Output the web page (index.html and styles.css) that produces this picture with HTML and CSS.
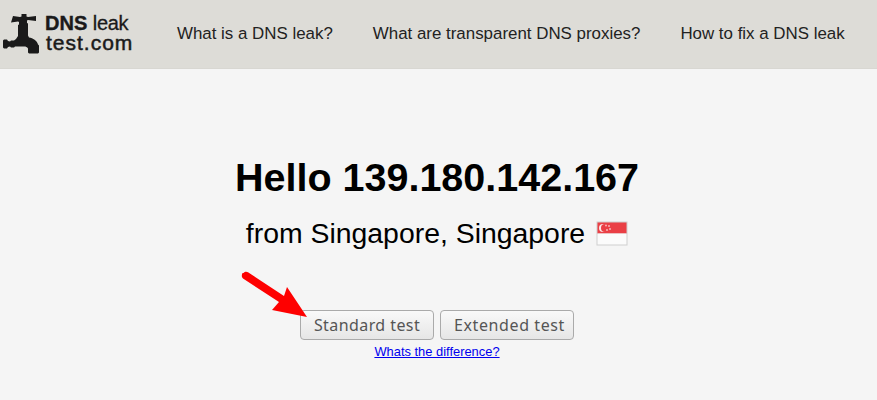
FILE: index.html
```html
<!DOCTYPE html>
<html lang="en">
<head>
<meta charset="utf-8">
<title>DNS leak test</title>
<link rel="stylesheet" href="styles.css">
</head>
<body>
<header class="top">
  <a class="logo" href="#">
    <svg class="tap" width="40" height="40" viewBox="2 13 40 40" aria-hidden="true">
      <path fill="#1a1a1a" d="M13 15l7 1 1.500-.5v-2.500h5v2.500l1.500.5 8-1v5l-8-1-1 .5v2.500l1 .5v12l1 2c4 .5 8 3 9 7l1 1v7l-1 1h-9l-1-1v-4c-1-1.500-2-2-4-2h-9l-1 1h-3l-1-1-2 .5-1 1.500h-3l-1-1v-7l1-1h3l1 1.500 2 .5 1-1h3l2-1.500 2-3v-11l1-.5v-2.500l-1-.5-7 1z"/>
    </svg>
    <span class="logo-text"><b>DNS</b> <span class="leak">leak</span><br><span class="domain">test.com</span></span>
  </a>
  <nav class="nav">
    <a href="#">What is a DNS leak?</a>
    <a href="#">What are transparent DNS proxies?</a>
    <a href="#">How to fix a DNS leak</a>
  </nav>
</header>
<main class="main">
  <h1 class="hello">Hello 139.180.142.167</h1>
  <p class="from">from Singapore, Singapore
    <svg class="flag" width="32" height="25" viewBox="0 0 32 25" aria-hidden="true">
      <rect x=".5" y=".5" width="31" height="24" fill="#cfcfcf"/>
      <rect x="1.500" y="1.500" width="29" height="11" fill="#ea3f45"/>
      <rect x="1.500" y="12.500" width="29" height="11" fill="#fbfbfb"/>
      <circle cx="7" cy="7" r="4" fill="#fbe7e7"/>
      <circle cx="9" cy="7" r="4" fill="#ea3f45"/>
      <g fill="#f6b4b4"><circle cx="10" cy="4.500" r="1"/><circle cx="13" cy="5" r="1"/><circle cx="11" cy="9" r="1"/><circle cx="14" cy="8" r="1"/></g>
    </svg>
  </p>
  <div class="actions">
    <div class="buttons">
      <button class="btn" type="button">Standard test</button>
      <button class="btn btn-ext" type="button">Extended test</button>
    </div>
    <a class="diff" href="#">Whats the difference?</a>
    <svg class="arrow" width="70" height="60" viewBox="0 0 70 60" aria-hidden="true">
      <path fill="#fe0000" d="M2.500 2c1.200-1.500 3-1.700 4.500-.8l36 23.800 3-9 20 30-35-7 7-8-36-23.500c-1.500-1.200-1.500-3.200-.5-5.500z"/>
    </svg>
  </div>
</main>
</body>
</html>
```
FILE: styles.css
```css
html, body {
  margin: 0;
  padding: 0;
}
body {
  background: #f5f5f5;
  color: #000;
  font-family: "Liberation Sans", Arial, sans-serif;
}
.top {
  display: flex;
  align-items: center;
  height: 68px;
  background: #dddcd7;
  border-bottom: 1px solid #d8d7d2;
}
.logo {
  display: flex;
  align-items: center;
  width: 177px;
  flex: none;
  padding-left: 2px;
  box-sizing: border-box;
  color: #1a1a1a;
  text-decoration: none;
}
.tap {
  flex: none;
  margin-top: -1px;
}
.logo-text {
  margin: -2px 0 0 3px;
  font-size: 20px;
  line-height: 20px;
  font-weight: 700;
}
.logo-text b {
  -webkit-text-stroke: .4px #1a1a1a;
}
.leak {
  font-weight: 400;
  letter-spacing: -.3px;
  -webkit-text-stroke: .3px #1a1a1a;
}
.domain {
  margin-left: 1px;
  font-size: 21px;
  letter-spacing: 1px;
  font-weight: 400;
  -webkit-text-stroke: .5px #1a1a1a;
}
.nav {
  display: flex;
  gap: 40px;
}
.nav a {
  color: #222;
  font-size: 16.9px;
  text-decoration: none;
}
.main {
  display: flex;
  flex-direction: column;
  align-items: center;
  padding-right: 3px;
}
.hello {
  margin: 86px 0 0;
  font-size: 39.5px;
  line-height: 44px;
  font-weight: 700;
}
.from {
  display: flex;
  align-items: center;
  gap: 11px;
  margin: 16px 0 0;
  font-size: 28.4px;
  line-height: 36px;
}
.actions {
  position: relative;
  display: flex;
  flex-direction: column;
  align-items: center;
  margin-top: 59px;
}
.buttons {
  display: flex;
  gap: 6px;
}
.btn {
  height: 30px;
  width: 134px;
  padding: 0;
  border: 1px solid #aaa;
  border-radius: 4px;
  background: linear-gradient(#f9f9f9, #e6e6e6);
  color: #555;
  font-family: "Noto Sans", sans-serif;
  font-size: 16px;
  letter-spacing: .42px;
}
.btn-ext {
  padding-left: 5px;
  letter-spacing: .6px;
}
.diff {
  margin-top: 4px;
  color: #0000ee;
  font-size: 12.9px;
  line-height: 15px;
}
.arrow {
  position: absolute;
  left: -59px;
  top: -39px;
}
```
